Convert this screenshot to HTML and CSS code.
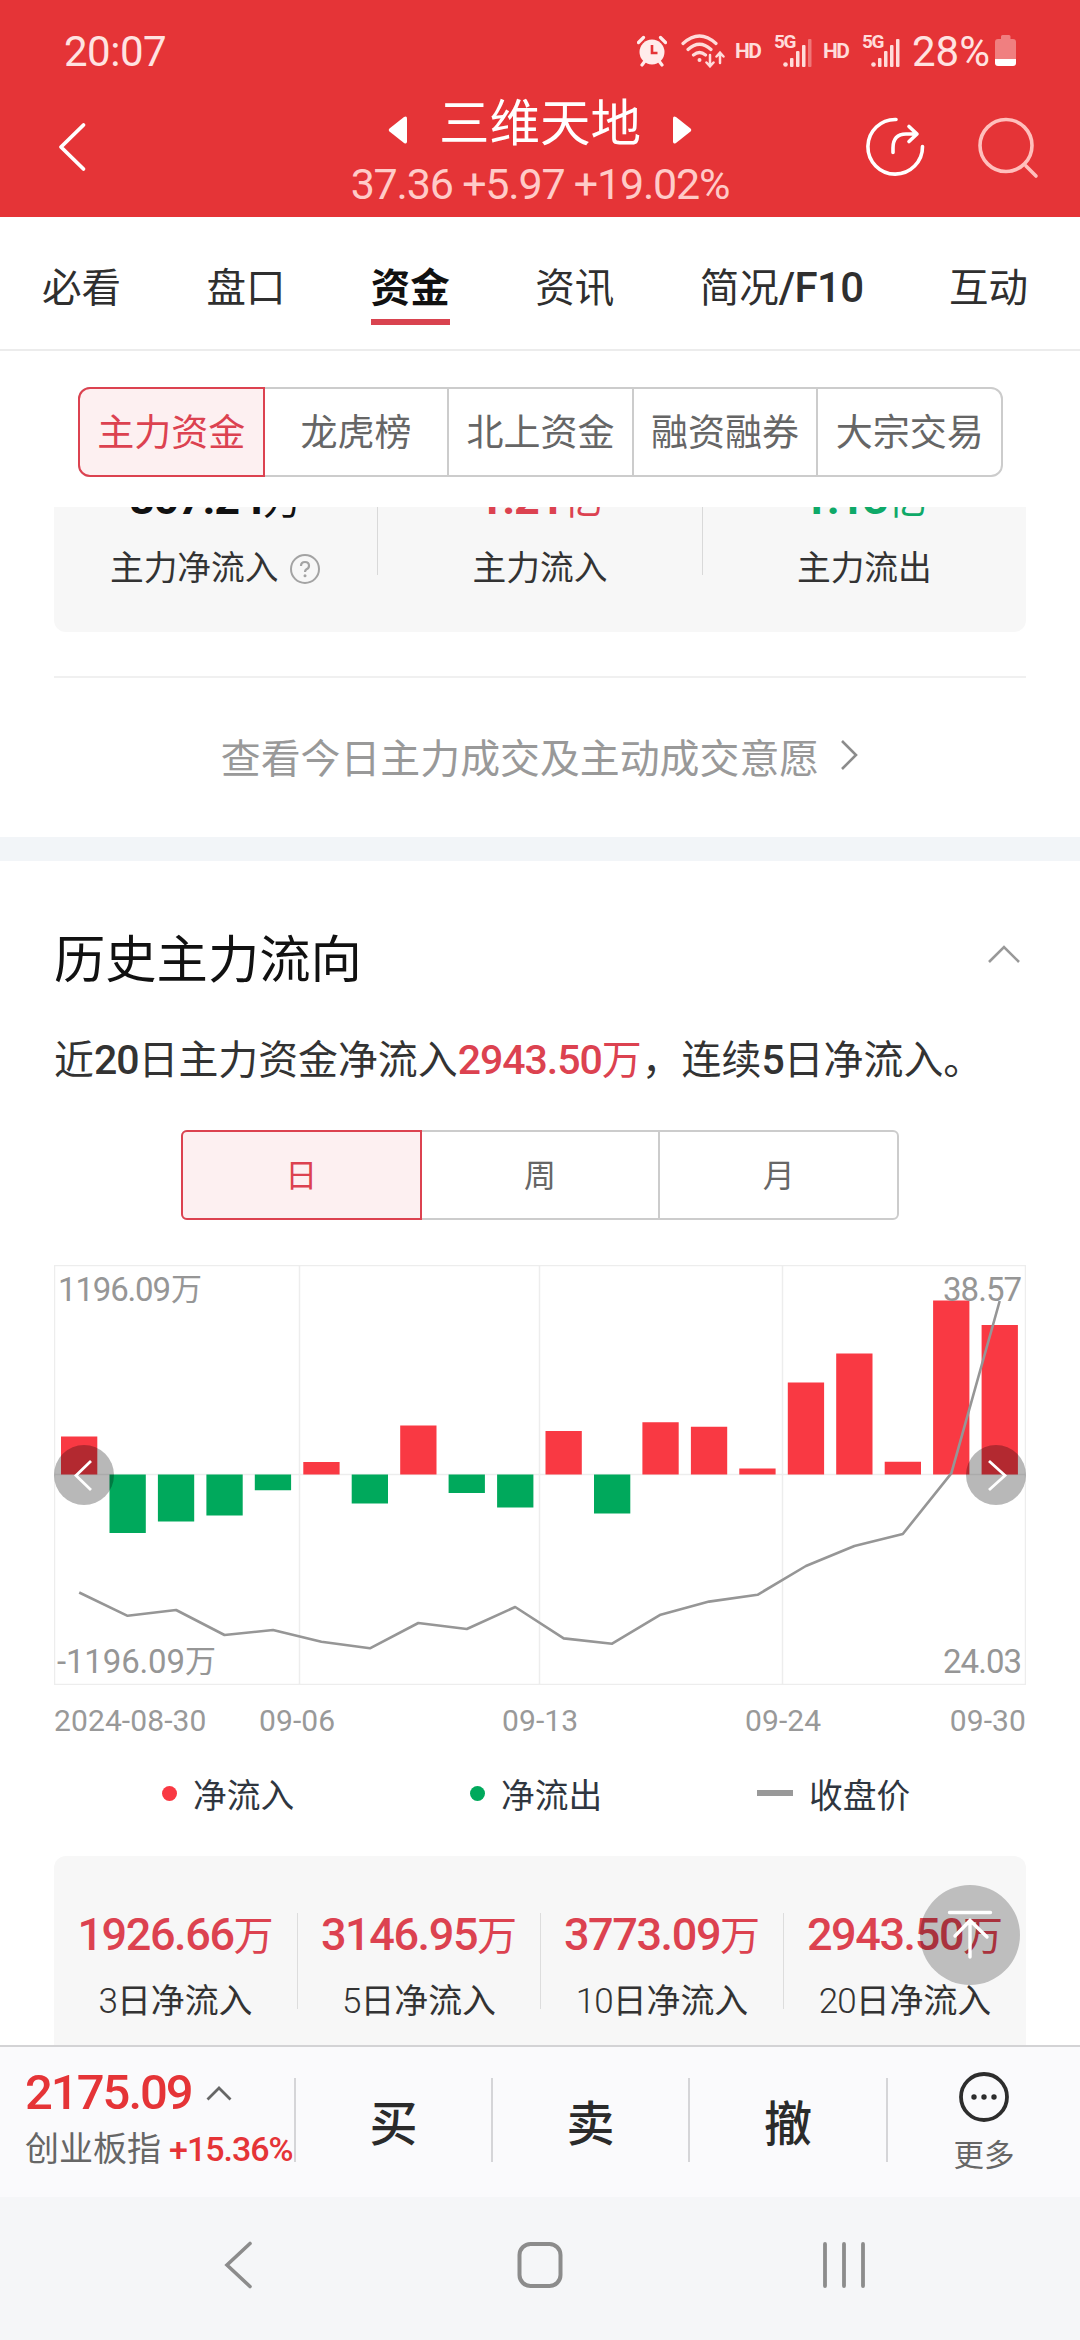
FILE: index.html
```html
<!DOCTYPE html>
<html lang="zh-CN">
<head>
<meta charset="utf-8">
<title>三维天地 资金</title>
<link rel="stylesheet" href="styles.css">
</head>
<body>
<div class="screen">
  <header class="top">
    <div class="status">
      <span class="clock">20:07</span>
      <div class="status-icons">
        <svg class="alarm" width="30" height="32" viewBox="0 0 30 32">
          <circle cx="15" cy="17" r="12.5" fill="#ffeceb"/>
          <path d="M1.5 7.5L6.5 2.5M28.500 7.500L23.500 2.500M5 30L8 26M25 30L22 26" stroke="#ffeceb" stroke-width="3.200" stroke-linecap="round"/>
          <path d="M15 10V18H20.500" fill="none" stroke="#e53437" stroke-width="2.600"/>
        </svg>
        <svg class="wifi" width="44" height="34" viewBox="0 0 44 34" fill="none" stroke="#ffdcda" stroke-width="3.200" stroke-linecap="round">
          <path d="M2 9.500Q18.500 -5.500 35 9.500M7 15.500Q18.500 5 30 15.500M12.500 21Q18.500 16 24.500 21"/>
          <circle cx="18.500" cy="26" r="1" fill="#ffdcda" stroke-width="2"/>
          <path d="M29 21V32M25.500 28.500L29 32.300L32.500 28.500M39 29V19M35.500 22.500L39 18.700L42.500 22.500" stroke-width="2.500"/>
        </svg>
        <span class="hd">HD</span>
        <span class="cell"><b>5G</b><svg width="30" height="28" viewBox="0 0 30 28" fill="#ffdcda"><circle cx="2.500" cy="25.500" r="2.300"/><rect x="7" y="19" width="3.500" height="9" rx="1"/><rect x="13" y="12" width="3.500" height="16" rx="1"/><rect x="19" y="6" width="3.500" height="22" rx="1"/><rect x="25" y="0" width="3.500" height="28" rx="1" opacity=".4"/></svg></span>
        <span class="hd">HD</span>
        <span class="cell"><b>5G</b><svg width="30" height="28" viewBox="0 0 30 28" fill="#ffdcda"><circle cx="2.500" cy="25.500" r="2.300"/><rect x="7" y="19" width="3.500" height="9" rx="1"/><rect x="13" y="12" width="3.500" height="16" rx="1"/><rect x="19" y="6" width="3.500" height="22" rx="1"/><rect x="25" y="0" width="3.500" height="28" rx="1"/></svg></span>
        <span class="percent">28%</span>
        <svg class="battery" width="21" height="32" viewBox="0 0 21 32"><path d="M6 1.500Q6 0 7.500 0H14Q15.500 0 15.500 1.500V4H18Q21 4 21 7V24H0V7Q0 4 3 4H6Z" fill="#f07f80"/><path d="M0 24H21V28Q21 31 18 31H3Q0 31 0 28Z" fill="#fff"/></svg>
      </div>
    </div>
    <div class="titlebar">
      <svg class="back" width="30" height="52" viewBox="0 0 30 52"><path d="M26.500 4L4 26L26.500 48" fill="none" stroke="#fff" stroke-width="3.800" stroke-linecap="round" stroke-linejoin="round"/></svg>
      <div class="stock">
        <div class="stock-name">
          <svg width="20" height="28" viewBox="0 0 20 28"><path d="M1.500 12.500L16 1Q19 -.5 19 2.500V25.500Q19 28.500 16 27L1.500 15.500Q0 14 1.500 12.500Z" fill="#fff"/></svg>
          <h1>三维天地</h1>
          <svg width="20" height="28" viewBox="0 0 20 28"><path d="M18.500 12.500L4 1Q1 -.5 1 2.500V25.500Q1 28.500 4 27L18.500 15.500Q20 14 18.500 12.500Z" fill="#fff"/></svg>
        </div>
        <div class="quote">37.36 +5.97 +19.02%</div>
      </div>
      <div class="actions">
        <svg width="60" height="60" viewBox="0 0 60 60" fill="none" stroke="#fff" stroke-width="3.600" stroke-linecap="round" stroke-linejoin="round"><path d="M31 2.500A27.300 27.300 0 1 0 57.500 29.500M28 35.500V31Q28 17 41 17H51M44 9.500L52 17L44 24.500"/></svg>
        <svg width="62" height="62" viewBox="0 0 62 62" fill="none" stroke="#ffbfbc" stroke-width="3.600" stroke-linecap="round"><circle cx="29" cy="28.500" r="26"/><path d="M49 49L59 59"/></svg>
      </div>
    </div>
  </header>

  <nav class="tabs">
    <span>必看</span><span>盘口</span><span class="on">资金</span><span>资讯</span><span>简况<b>/F10</b></span><span>互动</span>
  </nav>

  <div class="seg-wrap">
    <div class="seg seg-main"><span class="on">主力资金</span><span>龙虎榜</span><span>北上资金</span><span>融资融券</span><span>大宗交易</span></div>
  </div>

  <main>
    <section class="today">
      <div class="flow-card">
        <div class="flow"><div class="flow-val"><b>807.24</b>万</div><div class="flow-label">主力净流入<svg width="32" height="32" viewBox="0 0 32 32"><circle cx="16" cy="16" r="14" fill="none" stroke="#a3a3a3" stroke-width="2"/><path d="M12 13Q12 9 16 9T20 12.700Q20 15 17.500 16.300Q16 17.200 16 19" fill="none" stroke="#a3a3a3" stroke-width="2.200"/><circle cx="16" cy="22.700" r="1.500" fill="#a3a3a3"/></svg></div></div>
        <div class="flow"><div class="flow-val red"><b>1.21</b>亿</div><div class="flow-label">主力流入</div></div>
        <div class="flow"><div class="flow-val green"><b>1.13</b>亿</div><div class="flow-label">主力流出</div></div>
      </div>
      <div class="more-link">查看今日主力成交及主动成交意愿<svg width="20" height="34" viewBox="0 0 20 34"><path d="M3 3L17 17L3 31" fill="none" stroke="#8c8c8c" stroke-width="2.600"/></svg></div>
    </section>

    <section class="history">
      <div class="history-head"><h2>历史主力流向</h2><svg width="36" height="22" viewBox="0 0 36 22"><path d="M3 19L18 4L33 19" fill="none" stroke="#999" stroke-width="2.600"/></svg></div>
      <p class="summary">近<b>20</b>日主力资金净流入<em><b>2943.50</b>万</em>，连续<b>5</b>日净流入。</p>
      <div class="seg seg-period"><span class="on">日</span><span>周</span><span>月</span></div>

      <div class="chart">
        <svg width="972" height="420" viewBox="54 1265 972 420">
          <path d="M54.500 1265.500H1025.500V1684.500H54.500ZM299.500 1265V1684M539.500 1265V1684M782.500 1265V1684M54 1474.500H1026" fill="none" stroke="#ededed" stroke-width="1.500"/>
          <path fill="#f93943" d="M61 1436.500h36.300v38h-36.300zM303.300 1462h36.300v12.600h-36.300zM400.200 1425.600h36.300v49h-36.300zM545.500 1431h36.300v43.600h-36.300zM642.400 1422.200h36.300v52.400h-36.300zM690.900 1426.800h36.300v47.800h-36.300zM739.300 1468.500h36.300v6.100h-36.300zM787.800 1382.400h36.300v92.200h-36.300zM836.200 1353.600h36.300v121h-36.300zM884.700 1461.800h36.300v12.800h-36.300zM933.100 1300.500h36.300v174.100h-36.300zM981.600 1325h36.300v149.600h-36.300z"/>
          <path fill="#00a95c" d="M109.500 1474.600h36.300v58.500h-36.300zM157.900 1474.600h36.300v47h-36.300zM206.400 1474.600h36.300v41h-36.300zM254.800 1474.600h36.300v15.700h-36.300zM351.700 1474.600h36.300v29h-36.300zM448.600 1474.600h36.300v18.400h-36.300zM497.100 1474.600h36.300v33h-36.300zM594 1474.600h36.300v39h-36.300z"/>
          <polyline fill="none" stroke="#969696" stroke-width="2.600" stroke-linejoin="round" points="79.200,1592.500 127.600,1615.800 176.100,1610 224.500,1635 273,1630 321.400,1641.800 369.900,1648.300 418.300,1623 466.800,1629 515.200,1607 563.700,1638.400 612.100,1643.700 660.600,1614.700 709,1601.600 757.500,1594.800 805.900,1566 854.400,1546 902.800,1534 951.300,1473.400 999.700,1301"/>
          <g class="axis">
            <text x="58" y="1301" textLength="113">1196.09</text><text x="171" y="1300" class="unit">万</text>
            <text x="57" y="1673" textLength="128">-1196.09</text><text x="185" y="1672" class="unit">万</text>
            <text x="943" y="1301" textLength="79">38.57</text>
            <text x="943" y="1673" textLength="79">24.03</text>
          </g>
        </svg>
        <button class="pager prev"><svg width="60" height="60" viewBox="0 0 60 60"><path d="M37 16L22 30.500L37 45" fill="none" stroke="#fff" stroke-width="2.800"/></svg></button>
        <button class="pager next"><svg width="60" height="60" viewBox="0 0 60 60"><path d="M23 16L39 30.500L23 45" fill="none" stroke="#fff" stroke-width="2.800"/></svg></button>
      </div>
      <div class="dates"><span>2024-08-30</span><span>09-06</span><span>09-13</span><span>09-24</span><span>09-30</span></div>
      <div class="legend"><span><i class="dot in"></i>净流入</span><span><i class="dot out"></i>净流出</span><span><i class="dash"></i>收盘价</span></div>

      <div class="sum-card">
        <div class="sum"><div class="sum-val"><b>1926.66</b>万</div><div class="sum-label"><i>3</i>日净流入</div></div>
        <div class="sum"><div class="sum-val"><b>3146.95</b>万</div><div class="sum-label"><i>5</i>日净流入</div></div>
        <div class="sum"><div class="sum-val"><b>3773.09</b>万</div><div class="sum-label"><i>10</i>日净流入</div></div>
        <div class="sum"><div class="sum-val"><b>2943.50</b>万</div><div class="sum-label"><i>20</i>日净流入</div></div>
      </div>
    </section>
    <button class="to-top"><svg width="100" height="100" viewBox="0 0 100 100"><path d="M29.500 27.500H70.500M50 72V36M35 51L50 35.500L67 52" fill="none" stroke="#fff" stroke-width="3.400" stroke-linecap="round"/></svg></button>
  </main>

  <footer class="trade">
    <div class="index">
      <div class="index-val">2175.09<svg width="28" height="18" viewBox="0 0 28 18"><path d="M2.500 15.500L14 4L25.500 15.500" fill="none" stroke="#666" stroke-width="2.800"/></svg></div>
      <div class="index-name">创业板指<b>+15.36%</b></div>
    </div>
    <span class="act">买</span><span class="act">卖</span><span class="act">撤</span>
    <div class="more"><svg width="52" height="52" viewBox="0 0 52 52"><circle cx="26" cy="26" r="23" fill="none" stroke="#2d2d2d" stroke-width="3.800"/><g fill="#2d2d2d"><circle cx="16" cy="26" r="2.700"/><circle cx="26" cy="26" r="2.700"/><circle cx="36" cy="26" r="2.700"/></g></svg><span>更多</span></div>
  </footer>
  <div class="sysnav">
    <svg width="30" height="50" viewBox="0 0 30 50"><path d="M27 3.500L4 25L27 46.500" fill="none" stroke="#8c8c8c" stroke-width="3.600" stroke-linecap="round"/></svg>
    <svg width="48" height="50" viewBox="0 0 48 50"><rect x="3.500" y="4" width="41" height="42" rx="11" fill="none" stroke="#8c8c8c" stroke-width="4"/></svg>
    <svg width="44" height="50" viewBox="0 0 44 50"><path d="M3 4V46M22 4V46M41 4V46" stroke="#8c8c8c" stroke-width="3.800" stroke-linecap="round"/></svg>
  </div>
</div>
</body>
</html>
```
FILE: styles.css
```css
* { box-sizing: border-box; margin: 0; padding: 0; }
body { width: 1080px; background: #fff; font-family: Roboto, "Noto Sans CJK SC", sans-serif; }
svg { display: block; flex: none; }
em, i { font-style: normal; }
h1, h2 { font-weight: 400; }
button { border: 0; }
.screen { width: 1080px; height: 2340px; display: flex; flex-direction: column; overflow: hidden; }

.top { height: 217px; background: #e53437; color: #fff; flex: none; }
.status { height: 97px; padding: 5px 64px 0 64px; display: flex; justify-content: space-between; align-items: center; }
.clock { font-size: 42px; color: #ffe3e1; letter-spacing: -0.5px; line-height: 50px; padding-top: 2px; }
.status-icons { display: flex; align-items: center; color: #ffdcda; }
.wifi { margin-left: 14px; }
.hd { font-size: 21px; font-weight: 700; letter-spacing: -1.500px; margin-left: 10px; width: 27px; }
.cell { display: grid; grid-template-columns: 9px 30px; margin-left: 12px; height: 34px; padding-top: 1px; }
.cell b { font-size: 19px; font-weight: 700; line-height: 14px; width: 24px; letter-spacing: -1.500px; }
.cell svg { margin-top: 4px; }
.percent { font-size: 42px; margin-left: 11px; line-height: 44px; color: #ffe3e1; padding-top: 2px; }
.battery { margin-left: 5px; }
.titlebar { height: 120px; display: flex; justify-content: space-between; padding: 0 42px 0 57px; }
.back { margin-top: 24px; width: 30px; }
.stock { display: flex; flex-direction: column; align-items: center; margin-left: 128px; }
.stock-name { display: flex; align-items: center; gap: 31px; height: 62px; }
.stock-name svg { margin-top: 4px; }
.stock-name h1 { font-size: 50.500px; line-height: 50px; margin-top: -8px; }
.quote { font-size: 43px; letter-spacing: -1.200px; line-height: 50px; color: #ffcbc8; white-space: nowrap; }
.actions { display: flex; gap: 52px; margin: 20px -1px 0 0; }

.tabs { height: 134px; flex: none; display: flex; justify-content: space-between; padding: 42px 52px 0 42px; border-bottom: 2px solid #ececec; font-size: 39.500px; line-height: 59px; color: #2f2f2f; }
.tabs b { font-weight: 500; font-size: 42px; letter-spacing: -0.600px; line-height: 50px; }
.tabs .on { font-weight: 700; color: #111; height: 66px; border-bottom: 6px solid #d9434f; }

.seg-wrap { height: 156px; flex: none; padding: 36px 77px 0 78px; }
.seg { display: flex; height: 90px; border: 2px solid #ccc; color: #666; }
.seg span { flex: 1; display: flex; align-items: center; justify-content: center; border-left: 2px solid #ccc; padding-bottom: 5px; }
.seg .on { color: #dc4250; background: #fdf0f1; border: 2px solid #dc4250; margin: -2px 0 -2px -2px; }
.seg .on + span { border-left: 0; }
.seg-main { border-radius: 12px; font-size: 37px; }
.seg-main .on { border-radius: 12px 0 0 12px; }
.seg-period { width: 718px; margin: 0 auto; border-radius: 6px; font-size: 32px; }
.seg-period .on { border-radius: 6px 0 0 6px; }

main { height: 1538px; flex: none; overflow: hidden; position: relative; }
.today { height: 354px; border-bottom: 24px solid #f2f5f8; padding: 0 54px; }
.flow-card { display: flex; height: 125px; background: #f7f7f7; border-radius: 0 0 12px 12px; }
.flow { flex: 1; text-align: center; position: relative; }
.flow + .flow { border-left: 1.500px solid #d9d9d9; height: 68px; }
.flow-val { font-size: 39px; line-height: 50px; margin-top: -33px; color: #111; }
.flow-val b { font-size: 45px; font-weight: 700; letter-spacing: -1.300px; }
.flow-label { font-size: 33.700px; line-height: 44px; margin-top: 21px; color: #333; display: flex; justify-content: center; align-items: center; gap: 11px; }
.flow-val.red { color: #dc4250; }
.flow-val.green { color: #0fa968; }
.more-link { margin-top: 44px; border-top: 2px solid #f0f0f0; height: 161px; padding-bottom: 5px; display: flex; align-items: center; justify-content: center; gap: 20px; font-size: 39.900px; color: #999; }

.history { padding: 0 54px; }
.history-head { display: flex; justify-content: space-between; height: 140px; padding: 62px 4px 0 0; }
.history-head h2 { font-size: 51.300px; line-height: 76px; color: #111; }
.history-head svg { margin-top: 20px; }
.summary { font-size: 39.900px; line-height: 60px; height: 129px; padding-top: 29px; color: #333; white-space: nowrap; }
.summary b { font-weight: 500; font-size: 41px; letter-spacing: -1px; }
.summary em { color: #dc4250; }
.chart { margin-top: 45px; height: 420px; position: relative; }
.axis { font-size: 33px; fill: #969696; font-weight: 400; }
.axis .unit { font-size: 31px; }
.pager { position: absolute; top: 180px; width: 60px; height: 60px; border-radius: 50%; background: rgba(0,0,0,.28); }
.prev { left: 0; }
.next { right: 0; }
.dates { display: grid; grid-template-columns: 205px 243px 243px 150px 131px; font-size: 30px; line-height: 36px; height: 71px; padding-top: 18px; color: #999; letter-spacing: .1px; }
.dates span:last-child { text-align: right; }
.legend { display: grid; grid-template-columns: 308px 288px 200px; padding-left: 108px; height: 100px; font-size: 33.700px; color: #2f3640; }
.legend span { display: flex; align-items: center; height: 74px; }
.dot { width: 15px; height: 15px; border-radius: 50%; margin-right: 16px; }
.in { background: #f93943; }
.out { background: #00a95c; }
.dash { width: 36px; height: 6px; background: #999; margin: 0 16px 0 -1px; }
.sum-card { display: grid; grid-template-columns: repeat(4, 1fr); background: #f7f7f7; border-radius: 12px 12px 0 0; height: 200px; padding-top: 57px; }
.sum { text-align: center; height: 96px; }
.sum + .sum { border-left: 1.500px solid #ddd; }
.sum-val { color: #dc4250; font-size: 40px; line-height: 50px; margin-top: -3px; white-space: nowrap; }
.sum-val b { font-weight: 500; font-size: 45px; letter-spacing: -1.400px; }
.sum-label { font-size: 33.900px; line-height: 44px; margin-top: 18px; color: #333; }
.sum-label i { letter-spacing: -1px; font-size: 35px; font-weight: 300; }
.to-top { position: absolute; left: 920px; top: 1378px; width: 100px; height: 100px; border-radius: 50%; background: rgba(0,0,0,.23); }

.trade { height: 152px; flex: none; background: #fafafc; border-top: 2px solid #d3d3d5; display: grid; grid-template-columns: 294px 197px 197px 198px 194px; }
.index { padding: 18px 0 0 25px; height: 117px; white-space: nowrap; }
.index-val { color: #e53437; font-size: 49px; font-weight: 500; letter-spacing: -2px; line-height: 56px; display: flex; align-items: center; gap: 13px; }
.index-name { font-size: 34px; line-height: 44px; margin-top: 6px; color: #666; display: flex; }
.index-name b { font-size: 34px; font-weight: 500; letter-spacing: -1px; color: #e53437; margin-left: 8px; line-height: 44px; }
.act { border-left: 2px solid #d5d5d8; height: 84px; margin-top: 31px; font-size: 48px; font-weight: 500; line-height: 93px; text-align: center; color: #2b2b2b; }
.more { border-left: 2px solid #d5d5d8; height: 84px; margin-top: 31px; display: flex; flex-direction: column; align-items: center; }
.more svg { margin-top: -7px; }
.more span { font-size: 30.500px; line-height: 40px; margin-top: 13px; color: #666; }
.sysnav { flex: 1; background: #f5f6f8; display: flex; justify-content: space-between; padding: 43px 214px 0 223px; }
.sysnav svg:nth-child(2) { margin-left: 5px; }
```
